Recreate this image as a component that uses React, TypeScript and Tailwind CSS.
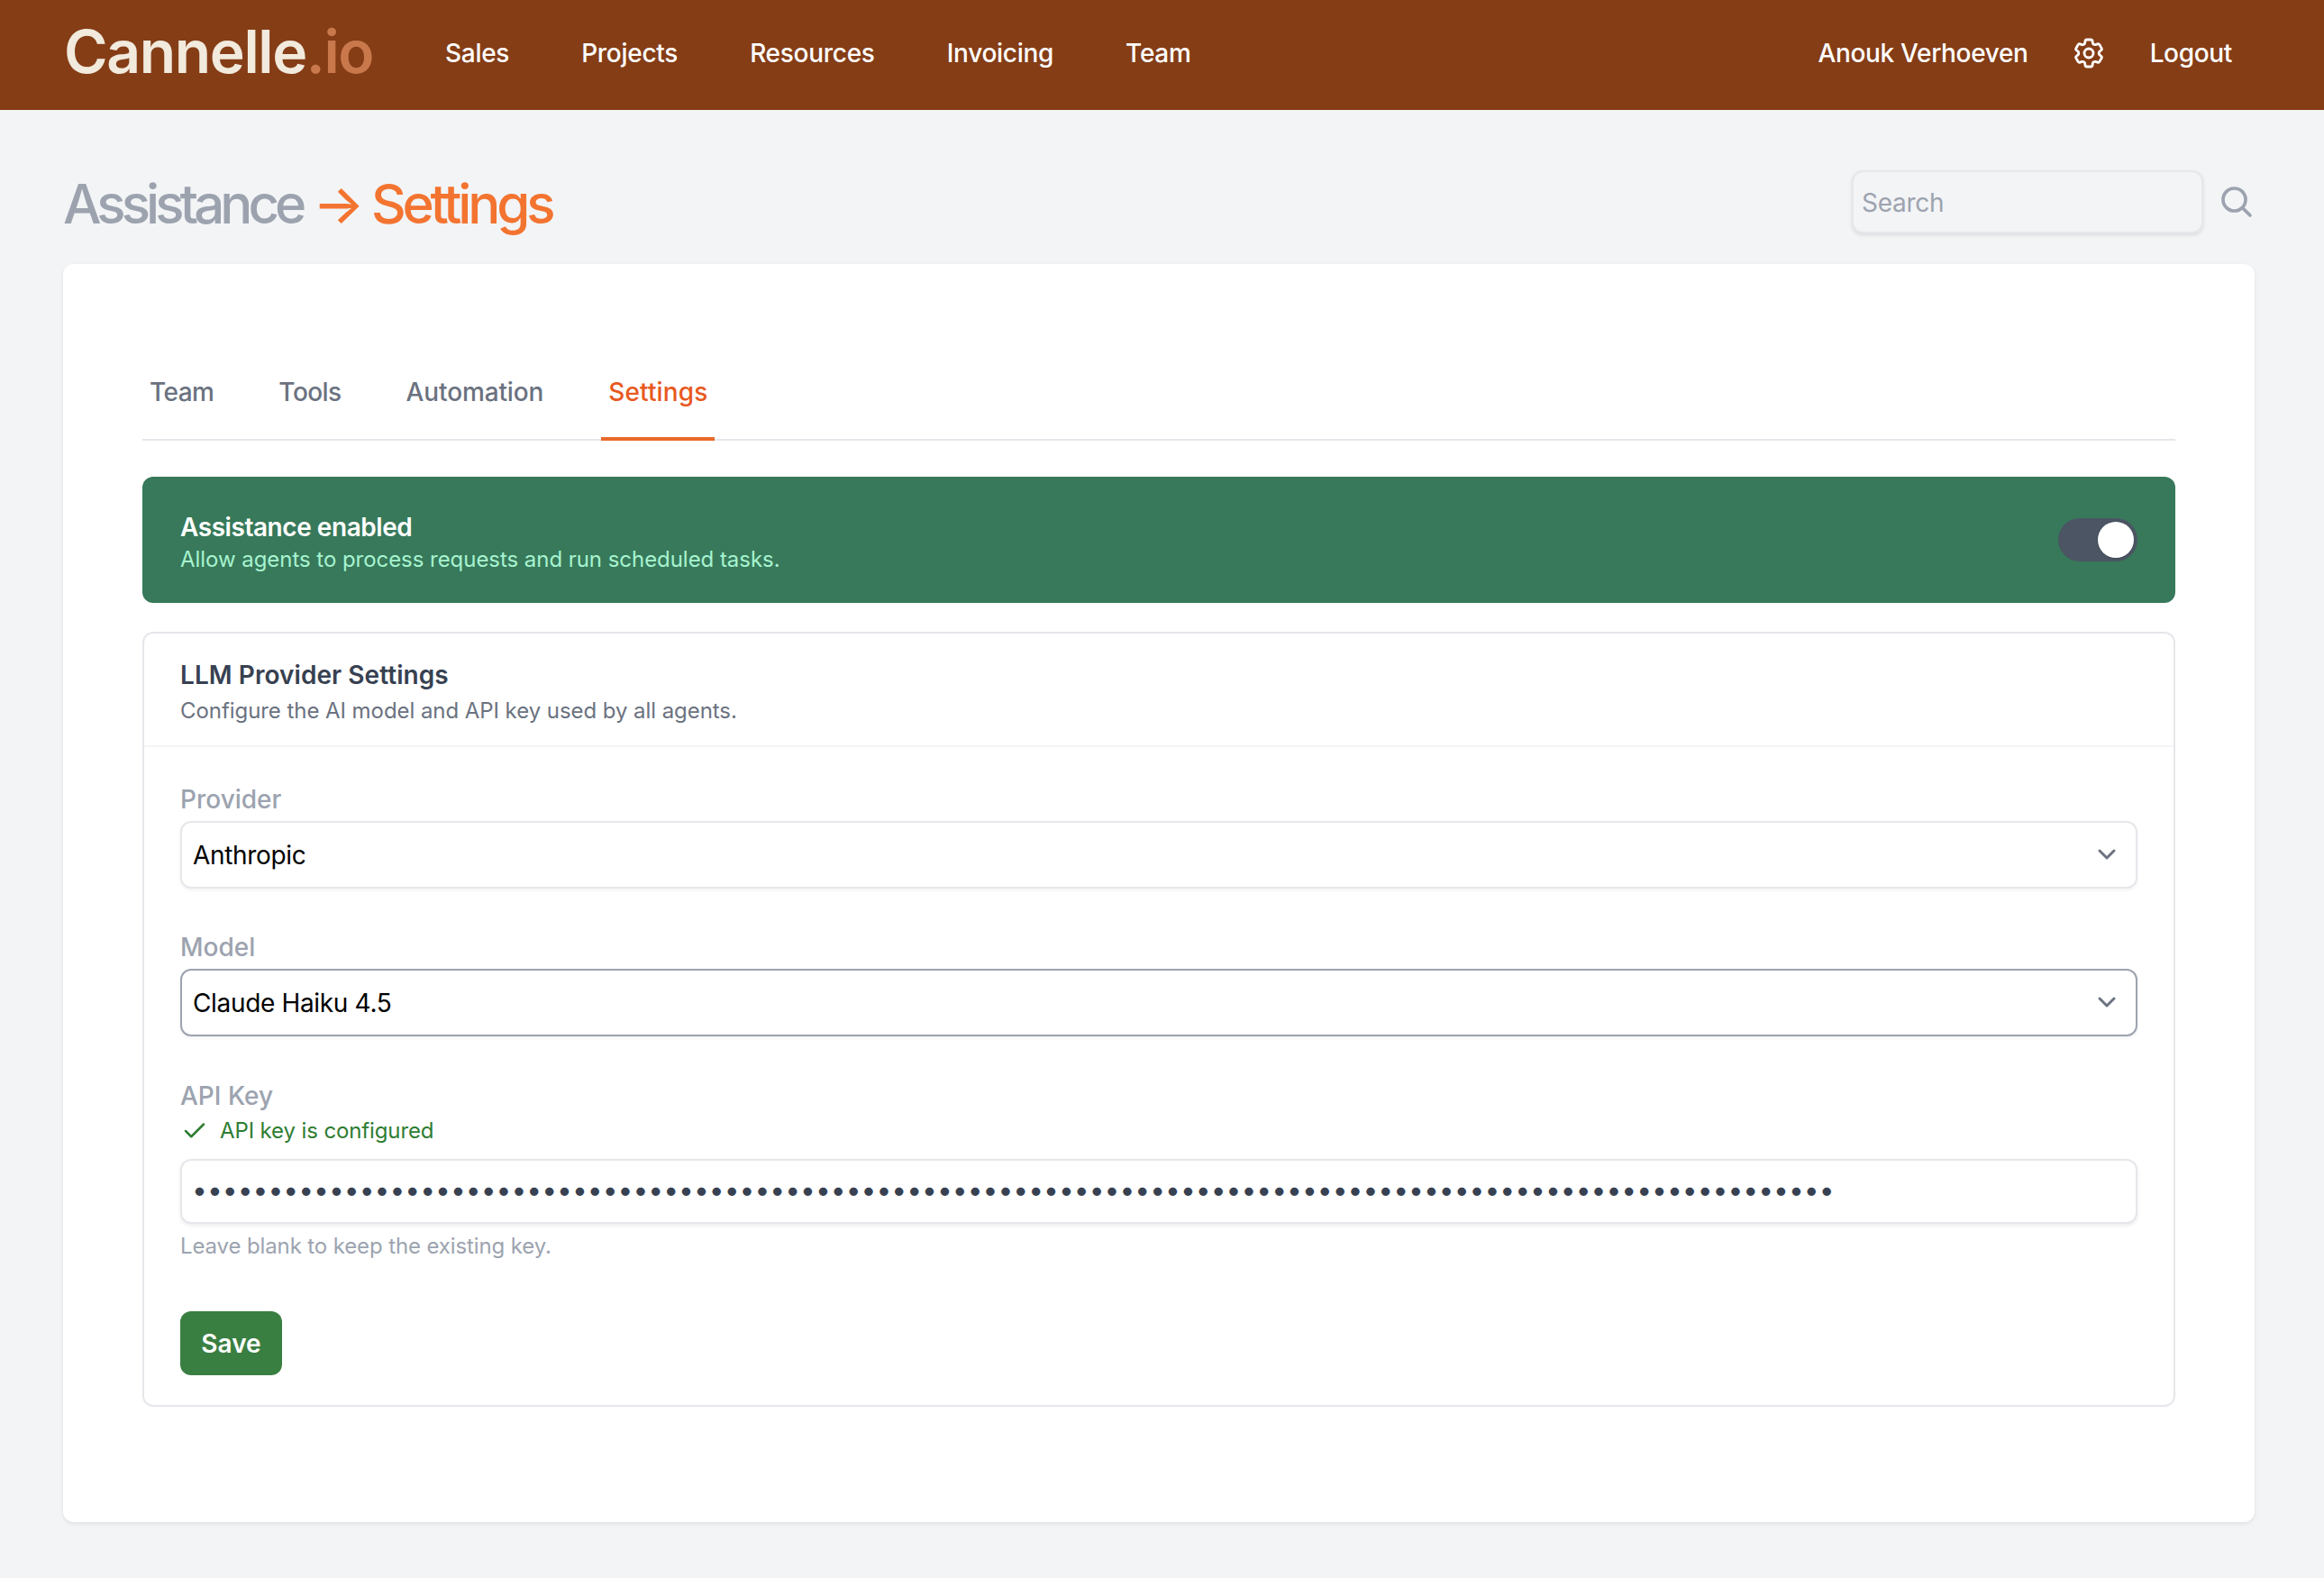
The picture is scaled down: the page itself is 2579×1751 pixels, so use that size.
import { HiOutlineCog6Tooth, HiOutlineMagnifyingGlass } from "react-icons/hi2"
import { Check } from "lucide-react"

const navItems = ["Sales", "Projects", "Resources", "Invoicing", "Team"]

const tabs = [
  { name: "Team", className: "border-transparent tracking-[-0.02em] text-[#6b7280]" },
  { name: "Tools", className: "border-transparent tracking-[-0.02em] text-[#6b7280]" },
  { name: "Automation", className: "border-transparent tracking-[-0.005em] text-[#6b7280]" },
  { name: "Settings", className: "border-[#ea6a2c] tracking-[0.005em] text-[#e8591f]" },
]

function SelectField({ label, value, active }: { label: string; value: string; active?: boolean }) {
  return (
    <div>
      <label className="block h-[40px] text-[28px] leading-[40px] font-medium text-[#9ca3af]">{label}</label>
      <div className="relative mt-[4px]">
        <select
          defaultValue={value}
          className={`block h-[75px] w-full appearance-none rounded-[12px] border-2 bg-white pl-[12px] pr-[80px] text-[28px] tracking-[-0.012em] text-black shadow-[0_2px_4px_rgba(0,0,0,0.05)] outline-none ${
            active ? "border-[#9ca3af]" : "border-[#e5e7eb]"
          }`}
        >
          <option>{value}</option>
        </select>
        <svg viewBox="0 0 20 20" fill="none" className="pointer-events-none absolute right-[14px] top-[17px] h-[40px] w-[40px]">
          <path d="m6 8 4 4 4-4" stroke="#6b7280" strokeWidth="1.5" strokeLinecap="round" strokeLinejoin="round" />
        </svg>
      </div>
    </div>
  )
}

export default function App() {
  return (
    <div className="min-h-screen bg-[#f3f4f6] font-[Inter,sans-serif] antialiased">
      <header className="flex h-[122px] items-center bg-[#853d16] pl-[71px] pr-[102px]">
        <div className="w-[423px] -translate-y-[4px] text-[66px] leading-none font-semibold tracking-[-0.021em] text-[#f1eadd]">
          Cannelle<span className="text-[#c9784c]">.io</span>
        </div>
        <nav className="flex -translate-y-[2px] gap-[80px] text-[28px] font-medium tracking-[-0.01em] text-white">
          {navItems.map((item) => (
            <a key={item}>{item}</a>
          ))}
        </nav>
        <div className="ml-auto flex -translate-y-[2px] items-center text-[28px] font-medium tracking-[-0.012em] text-white">
          <span>Anouk Verhoeven</span>
          <HiOutlineCog6Tooth strokeWidth={1.7} className="ml-[47px] h-[40px] w-[40px]" />
          <span className="ml-[48px]">Logout</span>
        </div>
      </header>

      <main className="pl-[70px] pr-[77px]">
        <div className="flex h-[171px] items-center justify-between pt-[36px]">
          <h1 className="text-[60px] leading-none font-medium tracking-[-0.07em] text-[#9ca3af]">
            <span className="tracking-[-0.083em]">Assistance</span> <span className="text-[#f37430]">→ Settings</span>
          </h1>
          <div className="flex items-center pb-[3px]">
            <input
              placeholder="Search"
              className="h-[70px] w-[390px] rounded-[12px] border-2 border-[#e5e7eb] bg-[#f3f4f6] px-[9px] pt-[2px] text-[28px] tracking-[-0.01em] shadow-[0_2px_4px_rgba(0,0,0,0.1)] outline-none placeholder:text-[#9ca3af]"
            />
            <HiOutlineMagnifyingGlass strokeWidth={2.2} className="ml-[17px] h-[40px] w-[40px] text-[#9ca3af]" />
          </div>
        </div>

        <div className="rounded-[12px] bg-white px-[88px] pb-[128px] pt-[88px] shadow-[0_2px_4px_rgba(0,0,0,0.08)]">
          <div className="flex gap-[56px] border-b-2 border-[#e5e7eb]">
            {tabs.map((tab) => (
              <a
                key={tab.name}
                className={`-mb-[2px] border-b-4 px-[8px] pb-[30px] pt-[34px] text-[28px] leading-[40px] font-medium ${tab.className}`}
              >
                {tab.name}
              </a>
            ))}
          </div>

          <div className="mt-[40px] flex h-[140px] items-center justify-between rounded-[12px] bg-[#37795a] pl-[42px] pr-[42px]">
            <div className="pt-[3px]">
              <div className="text-[28px] leading-[40px] font-semibold tracking-[-0.016em] text-white">Assistance enabled</div>
              <div className="text-[24px] leading-[32px] tracking-[-0.002em] text-[#a7f3d0]">Allow agents to process requests and run scheduled tasks.</div>
            </div>
            <div className="flex h-[48px] w-[88px] items-center justify-end rounded-full bg-[#4b5563] pr-[4px]">
              <span className="h-[40px] w-[40px] rounded-full bg-white shadow-sm" />
            </div>
          </div>

          <section className="mt-[32px] rounded-[12px] border-2 border-[#e5e7eb]">
            <div className="h-[126px] border-b-2 border-[#f3f4f6] px-[40px] pt-[26px]">
              <h2 className="text-[28px] leading-[40px] font-semibold tracking-[0.002em] text-[#374151]">LLM Provider Settings</h2>
              <p className="text-[24px] leading-[40px] tracking-[-0.0025em] text-[#6b7280]">Configure the AI model and API key used by all agents.</p>
            </div>
            <div className="px-[40px] pb-[33px] pt-[38px]">
              <SelectField label="Provider" value="Anthropic" />
              <div className="mt-[45px]">
                <SelectField label="Model" value="Claude Haiku 4.5" active />
              </div>
              <div className="mt-[46px]">
                <label className="block h-[40px] text-[28px] leading-[40px] font-medium text-[#9ca3af]">API Key</label>
                <div className="mt-[1px] flex h-[36px] items-center text-[24px] tracking-[-0.005em] text-[#2f7d32]">
                  <Check className="ml-[1px] h-[30px] w-[30px]" strokeWidth={2} />
                  <span className="ml-[13px]">API key is configured</span>
                </div>
                <input
                  type="password"
                  readOnly
                  value={"x".repeat(108)}
                  className="mt-[13px] block h-[72px] w-full rounded-[12px] border-2 border-[#e5e7eb] bg-white pb-[5px] pl-[11px] pr-[12px] text-[30px] text-[#374151] shadow-[0_2px_4px_rgba(0,0,0,0.08)] outline-none"
                />
                <p className="mt-[9px] text-[24px] leading-[32px] tracking-[-0.005em] text-[#9ca3af]">Leave blank to keep the existing key.</p>
              </div>
              <button className="mt-[56px] block h-[71px] w-[113px] rounded-[12px] bg-[#3a7f42] pt-[1px] text-[28px] font-semibold text-white">
                Save
              </button>
            </div>
          </section>
        </div>
      </main>
    </div>
  )
}
